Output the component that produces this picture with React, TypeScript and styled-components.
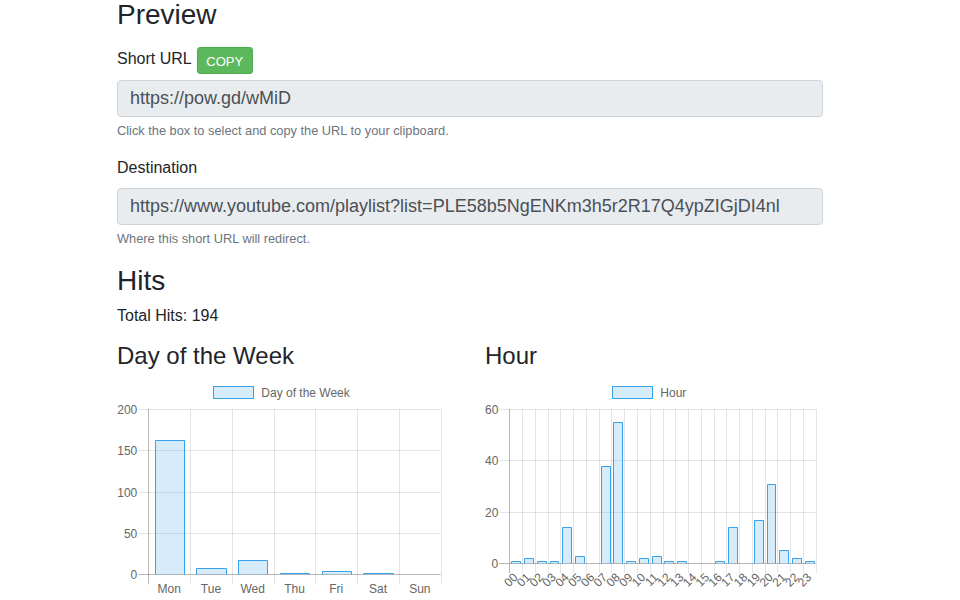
import React from "react";
import styled, { createGlobalStyle } from "styled-components";

const GlobalStyle = createGlobalStyle`
  html, body { margin: 0; padding: 0; background: #fff; }
  body {
    font-family: "Liberation Sans", Arial, Helvetica, sans-serif;
    color: #212529;
    font-size: 16px;
    line-height: 1.5;
  }
`;

const Page = styled.main`
  width: 706px;
  margin-left: 117px;
  padding: 1px 0 40px;
`;

const Heading = styled.h2<{ $size: number; $mb: number }>`
  margin: 0 0 ${(p) => p.$mb}px;
  font-size: ${(p) => p.$size}px;
  font-weight: 500;
  line-height: 1;
  color: #212529;
`;

const FormGroup = styled.div<{ $mb: number }>`
  margin-bottom: ${(p) => p.$mb}px;
`;

const LabelRow = styled.div`
  display: flex;
  align-items: flex-start;
  gap: 5px;
  height: 27px;
  margin-bottom: 6px;
`;

const Label = styled.label<{ $block?: boolean }>`
  display: ${(p) => (p.$block ? "block" : "inline-block")};
  font-size: 16px;
  line-height: 24px;
  margin-bottom: ${(p) => (p.$block ? 8 : 0)}px;
`;

const CopyButton = styled.button`
  box-sizing: border-box;
  height: 27px;
  width: 56px;
  padding: 2px 0 0;
  border: 1px solid #4cae4c;
  border-radius: 3px;
  background: #5cb85c;
  color: #fff;
  font-family: "Liberation Sans", Arial, sans-serif;
  font-size: 13px;
  line-height: 23px;
  text-align: center;
  cursor: pointer;
`;

const UrlBox = styled.input`
  box-sizing: border-box;
  display: block;
  width: 100%;
  height: 37px;
  padding: 0 12px;
  border: 1px solid #ced4da;
  border-radius: 4px;
  background: #e9ecef;
  color: #495057;
  font-family: "Liberation Sans", Arial, sans-serif;
  font-size: 18px;
  outline: none;
`;

const Help = styled.small`
  display: block;
  margin-top: 4px;
  font-size: 12.8px;
  line-height: 19.2px;
  color: #6c757d;
`;

const TotalHits = styled.p`
  margin: 0 0 16px;
  font-size: 16px;
  line-height: 24px;
`;

const ChartGrid = styled.div`
  display: grid;
  grid-template-columns: 338px 338px;
  column-gap: 30px;
`;

const ChartPanel = styled.section`
  display: flex;
  flex-direction: column;
`;

const ChartSvg = styled.svg`
  display: block;
  overflow: visible;
  font-family: "Liberation Sans", Arial, Helvetica, sans-serif;
  font-size: 12px;
  text {
    fill: #666;
  }
`;

const FILL = "rgba(54,162,235,0.2)";
const STROKE = "rgb(54,162,235)";
const LIGHT = "rgba(0,0,0,0.1)";
const DARK = "rgba(0,0,0,0.28)";
const TOP = 33;

type ChartProps = {
  legend: string;
  legendX: number;
  labels: string[];
  data: number[];
  max: number;
  step: number;
  axisX: number;
  plotRight: number;
  zeroY: number;
  rotate?: boolean;
};

const px = (v: number) => Math.round(v) + 0.5;

function BarChart(p: ChartProps) {
  const n = p.labels.length;
  const cw = (p.plotRight - p.axisX) / n;
  const scale = (p.zeroY - TOP) / p.max;
  const ticks: number[] = [];
  for (let v = 0; v <= p.max; v += p.step) ticks.push(v);
  const bw = cw * 0.7;
  const zy = px(p.zeroY);

  return (
    <ChartSvg width={338} height={230} viewBox="0 0 338 230">
      <rect x={px(p.legendX)} y={10.5} width={40} height={12} fill={FILL} stroke={STROKE} strokeWidth={1} />
      <text x={p.legendX + 48} y={16.5} dominantBaseline="central">
        {p.legend}
      </text>

      {ticks.map((v) => {
        const y = px(p.zeroY - v * scale);
        return (
          <g key={"h" + v}>
            <line x1={p.axisX - 10} x2={p.plotRight} y1={y} y2={y} stroke={v === 0 ? DARK : LIGHT} strokeWidth={1} />
            <text x={p.axisX - 11} y={y} textAnchor="end" dominantBaseline="central">
              {v}
            </text>
          </g>
        );
      })}

      {Array.from({ length: n + 1 }, (_, i) => {
        const x = px(p.axisX + i * cw);
        return <line key={"v" + i} x1={x} x2={x} y1={TOP} y2={p.zeroY + 10} stroke={i === 0 ? DARK : LIGHT} strokeWidth={1} />;
      })}

      {p.data.map((v, i) => {
        if (v <= 0) return null;
        const cx = p.axisX + (i + 0.5) * cw;
        const x0 = px(cx - bw / 2);
        const x1 = px(cx + bw / 2);
        const y = px(p.zeroY - v * scale);
        return (
          <g key={"b" + i}>
            <rect x={x0} y={y} width={x1 - x0} height={zy - y} fill={FILL} />
            <path d={`M${x0} ${zy} V${y} H${x1} V${zy}`} fill="none" stroke={STROKE} strokeWidth={1} />
          </g>
        );
      })}

      {p.labels.map((l, i) => {
        const cx = p.axisX + (i + 0.5) * cw;
        if (p.rotate) {
          const ay = p.zeroY + 12;
          return (
            <text
              key={"l" + i}
              x={cx}
              y={ay}
              textAnchor="end"
              dominantBaseline="central"
              transform={`rotate(-45 ${cx} ${ay})`}
            >
              {l}
            </text>
          );
        }
        return (
          <text key={"l" + i} x={cx} y={p.zeroY + 15} textAnchor="middle" dominantBaseline="central">
            {l}
          </text>
        );
      })}
    </ChartSvg>
  );
}

const days = ["Mon", "Tue", "Wed", "Thu", "Fri", "Sat", "Sun"];
const dayHits = [162, 8, 17, 1, 4, 2, 0];
const hours = Array.from({ length: 24 }, (_, i) => String(i).padStart(2, "0"));
const hourHits = [1, 2, 1, 1, 14, 3, 0, 38, 55, 1, 2, 3, 1, 1, 0, 0, 1, 14, 0, 17, 31, 5, 2, 1];

export default function App() {
  return (
    <>
      <GlobalStyle />
      <Page>
        <Heading $size={28} $mb={18}>Preview</Heading>

        <FormGroup $mb={16}>
          <LabelRow>
            <Label>Short URL</Label>
            <CopyButton type="button">COPY</CopyButton>
          </LabelRow>
          <UrlBox readOnly value="https://pow.gd/wMiD" />
          <Help>Click the box to select and copy the URL to your clipboard.</Help>
        </FormGroup>

        <FormGroup $mb={19}>
          <Label $block>Destination</Label>
          <UrlBox readOnly value="https://www.youtube.com/playlist?list=PLE58b5NgENKm3h5r2R17Q4ypZIGjDI4nl" />
          <Help>Where this short URL will redirect.</Help>
        </FormGroup>

        <Heading $size={28} $mb={9}>Hits</Heading>
        <TotalHits>Total Hits: 194</TotalHits>

        <ChartGrid>
          <ChartPanel>
            <Heading $size={24} $mb={8}>Day of the Week</Heading>
            <BarChart
              legend="Day of the Week"
              legendX={96.3}
              labels={days}
              data={dayHits}
              max={200}
              step={50}
              axisX={31.3}
              plotRight={323.7}
              zeroY={198.3}
            />
          </ChartPanel>
          <ChartPanel>
            <Heading $size={24} $mb={8}>Hour</Heading>
            <BarChart
              legend="Hour"
              legendX={127.3}
              labels={hours}
              data={hourHits}
              max={60}
              step={20}
              axisX={24.3}
              plotRight={330.7}
              zeroY={187.3}
              rotate
            />
          </ChartPanel>
        </ChartGrid>
      </Page>
    </>
  );
}
